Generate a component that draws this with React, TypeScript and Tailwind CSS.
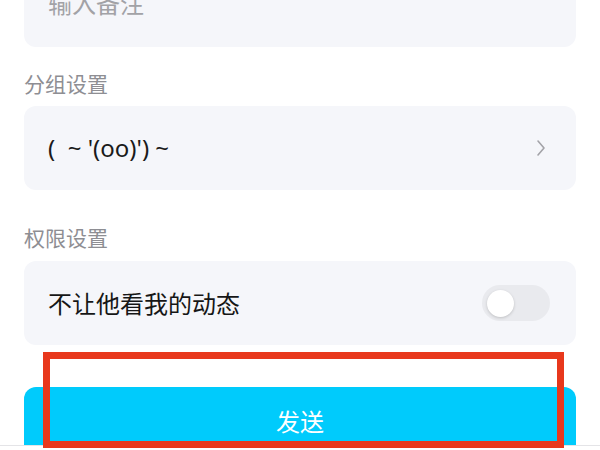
const font = { fontFamily: '"Noto Sans CJK SC", "Noto Sans", sans-serif' };

function Chevron() {
  return (
    <svg className="w-[14px] h-[18px]" viewBox="0 0 14 18" fill="none" stroke="#a3a3a8" strokeWidth={1.6} strokeLinecap="round" strokeLinejoin="round">
      <path d="M4 2l6 7-6 7" />
    </svg>
  );
}

export default function App() {
  return (
    <div className="relative w-[600px] h-[450px] overflow-hidden bg-white" style={font}>
      <div className="px-6">
        {/* 备注 */}
        <div className="-mt-[41px] h-[88px] rounded-xl bg-[#f5f6fa] flex items-center px-6">
          <span className="text-[24px] text-[#a2a2a6] leading-none">输入备注</span>
        </div>

        <div className="mt-[24px] h-[24px] flex items-center text-[21px] text-[#8e8e93] leading-none">分组设置</div>

        <div className="mt-[11px] h-[84px] rounded-xl bg-[#f5f6fa] flex items-center justify-between pl-6 pr-[28px]">
          <span className="text-[24px] text-[#1a1a1a] leading-none whitespace-pre" style={{ fontFamily: '"Noto Sans", "Open Sans", sans-serif' }}>(  ~ '(oo)') ~</span>
          <Chevron />
        </div>

        <div className="mt-[35px] h-[24px] flex items-center text-[21px] text-[#8e8e93] leading-none">权限设置</div>

        <div className="mt-[12px] h-[84px] rounded-xl bg-[#f5f6fa] flex items-center justify-between pl-6 pr-[26px]">
          <span className="text-[24px] text-[#161616] leading-none">不让他看我的动态</span>
          <div className="w-[68px] h-[36px] rounded-full bg-[#e9eaee] flex items-center px-[5px]">
            <div className="w-[27px] h-[27px] rounded-full bg-white shadow-[0_1px_3px_rgba(0,0,0,0.18)]" />
          </div>
        </div>

        <div className="mt-[42px] h-[58px] rounded-t-xl bg-[#00cbfc] flex items-center justify-center pt-[10px]">
          <span className="text-[24px] text-white leading-none">发送</span>
        </div>
      </div>
      <div className="h-px bg-[#e4e4e7]" />

      {/* 标注框 */}
      <div className="absolute left-[43px] top-[352px] w-[521px] h-[96px] border-[7px] border-[#e8381c]" />
    </div>
  );
}
